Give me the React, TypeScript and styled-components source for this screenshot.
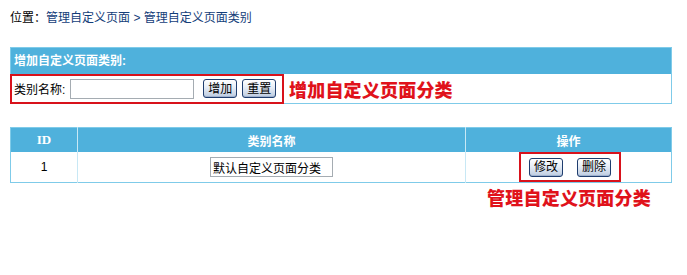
import styled, { createGlobalStyle } from "styled-components";

const GlobalStyle = createGlobalStyle`
  body {
    margin: 0;
    background: #ffffff;
    font-family: "Liberation Sans", "Noto Sans CJK SC", sans-serif;
    font-size: 12px;
    color: #000000;
  }
`;

const Page = styled.div`
  width: 687px;
  padding: 9px 15px 0 10px;
  box-sizing: border-box;
`;

const Crumbs = styled.div`
  height: 18px;
  line-height: 18px;
  font-size: 12px;
  margin-bottom: 20px;
`;

const CrumbLink = styled.a`
  color: #133d79;
  text-decoration: none;
`;

const Panel = styled.div`
  width: 662px;
  border: 1px solid #7fcbe9;
  box-sizing: border-box;
  margin-bottom: 23px;
`;

const PanelHead = styled.div`
  height: 26px;
  line-height: 26px;
  background: #4fb1dc;
  color: #ffffff;
  font-weight: bold;
  padding-left: 3px;
`;

const PanelBody = styled.div`
  display: flex;
  align-items: center;
  height: 29px;
`;

const RedBox = styled.div`
  display: flex;
  align-items: center;
  gap: 5px;
  border: 2px solid #d8121b;
  box-sizing: border-box;
`;

const AddBox = styled(RedBox)`
  width: 274px;
  height: 30px;
  margin-left: -1px;
  padding-left: 2px;
`;

const Label = styled.span`
  font-size: 12px;
`;

const TextInput = styled.input<{ w: number }>`
  width: ${(p) => p.w}px;
  height: 20px;
  box-sizing: border-box;
  border: 1px solid #a5acb2;
  font-family: "Liberation Sans", "Noto Sans CJK SC", sans-serif;
  font-size: 12px;
  padding: 0 2px;
  background: #ffffff;
  margin-right: 4px;
`;

const Btn = styled.button`
  height: 19px;
  padding: 0 4px;
  font-family: "Liberation Sans", "Noto Sans CJK SC", sans-serif;
  font-size: 12px;
  line-height: 14px;
  color: #000000;
  border: 1px solid #1f3d6e;
  border-radius: 3px;
  background: linear-gradient(#ffffff, #e6edf6 45%, #bccbe0);
  box-shadow: inset 0 -1px 0 #9fb2cf;
`;

const Note = styled.span`
  color: #e0121b;
  font-family: "Noto Sans CJK SC", sans-serif;
  font-weight: 900;
  font-size: 18px;
  letter-spacing: 0.2px;
`;

const AddNote = styled(Note)`
  margin-left: 5px;
`;

const Grid = styled.table`
  width: 662px;
  border-collapse: collapse;
  border: 1px solid #7fcbe9;
`;

const Th = styled.th<{ w?: number }>`
  width: ${(p) => (p.w ? `${p.w}px` : "auto")};
  height: 24px;
  background: #4fb1dc;
  color: #ffffff;
  font-weight: bold;
  font-size: 12px;
  text-align: center;
  border-left: 1px solid #c8e8f5;
  padding: 0;
  &:first-child {
    border-left: none;
    font-family: "Liberation Serif", serif;
    font-size: 13px;
  }
`;

const Td = styled.td`
  height: 30px;
  text-align: center;
  border-left: 1px solid #c8e8f5;
  padding: 0;
  &:first-child {
    border-left: none;
  }
  & > input {
    margin-right: 0;
  }
`;

const OpsBox = styled(RedBox)`
  display: inline-flex;
  width: 102px;
  height: 30px;
  justify-content: center;
  gap: 14px;
  vertical-align: middle;
  margin-left: 3px;
`;

const NoteRow = styled.div`
  display: flex;
  justify-content: flex-end;
  width: 662px;
  margin-top: 1px;
`;

const ManageNote = styled(Note)`
  width: 206px;
  text-align: center;
`;

const App = () => {
  return (
    <>
      <GlobalStyle />
      <Page>
        <Crumbs>
          位置：<CrumbLink href="#">管理自定义页面</CrumbLink>{" "}
          <CrumbLink href="#">&gt; 管理自定义页面类别</CrumbLink>
        </Crumbs>
        <Panel>
          <PanelHead>增加自定义页面类别:</PanelHead>
          <PanelBody>
            <AddBox>
              <Label>类别名称:</Label>
              <TextInput w={124} />
              <Btn>增加</Btn>
              <Btn>重置</Btn>
            </AddBox>
            <AddNote>增加自定义页面分类</AddNote>
          </PanelBody>
        </Panel>
        <Grid>
          <thead>
            <tr>
              <Th w={66}>ID</Th>
              <Th>类别名称</Th>
              <Th w={205}>操作</Th>
            </tr>
          </thead>
          <tbody>
            <tr>
              <Td>1</Td>
              <Td>
                <TextInput w={123} defaultValue="默认自定义页面分类" />
              </Td>
              <Td>
                <OpsBox>
                  <Btn>修改</Btn>
                  <Btn>删除</Btn>
                </OpsBox>
              </Td>
            </tr>
          </tbody>
        </Grid>
        <NoteRow>
          <ManageNote>管理自定义页面分类</ManageNote>
        </NoteRow>
      </Page>
    </>
  );
};

export default App;
